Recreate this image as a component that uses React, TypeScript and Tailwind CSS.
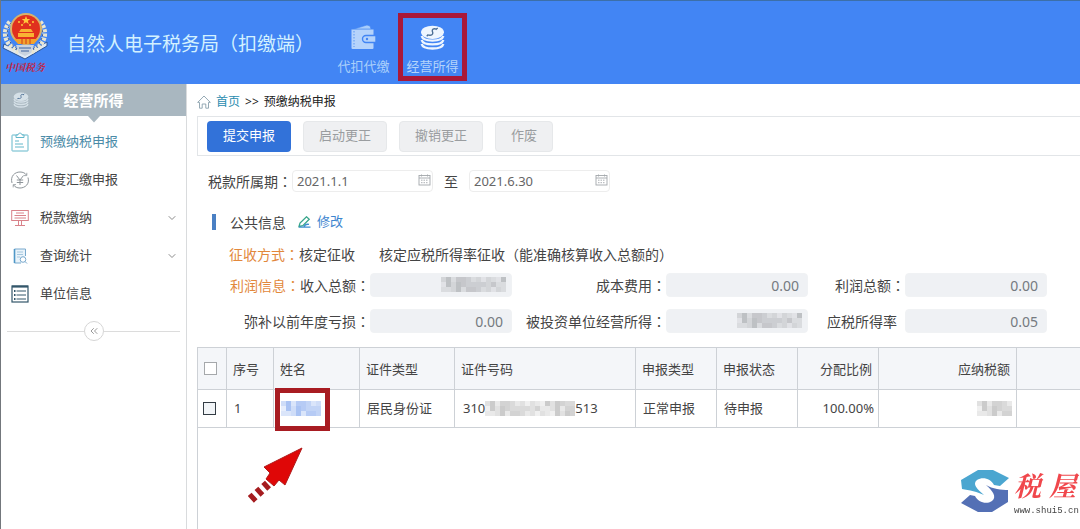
import { useState } from 'react';
import type { ReactNode } from 'react';
import { ChevronDown, ChevronsLeft } from 'lucide-react';

const INK = [4, 5, 3, 6, 4, 7, 3, 2, 5, 6, 3, 4, 7, 5, 3, 6, 2, 4, 5, 3, 6, 4, 7, 5];

// Block pattern shown in place of private values
function Redacted({ cols, className = '' }: { cols: number; className?: string }) {
  const cells = [];
  for (let row = 0; row < 3; row++) {
    for (let col = 0; col < cols; col++) {
      const level = INK[(col * 5 + row * 7) % INK.length];
      cells.push(
        <rect key={`${row}-${col}`} x={col * 5} y={row * 5} width="5" height="5" opacity={level / 10} />
      );
    }
  }
  return (
    <svg width={cols * 5} height="15" fill="currentColor" shapeRendering="crispEdges" aria-hidden="true" className={className}>
      {cells}
    </svg>
  );
}

function Colon() {
  return <span className="font-['Noto_Sans_CJK_TC',sans-serif]">：</span>;
}

function Emblem() {
  return (
    <svg width="48" height="50" viewBox="0 0 48 50" aria-hidden="true">
      <path d="M3 33 L24 43 L46 31 L46 35 L24 48 L2 37 Z" fill="#dfe8f3" stroke="#2b5596" strokeWidth="1" />
      <path d="M9 11 C1 20 3 33 18 41" fill="none" stroke="#e9e6d2" strokeWidth="5" strokeDasharray="3 1.2" />
      <path d="M39 11 C47 20 45 33 30 41" fill="none" stroke="#e9e6d2" strokeWidth="5" strokeDasharray="3 1.2" />
      <path d="M10 12 C3 21 6 32 18 39 M38 12 C45 21 42 32 30 39" fill="none" stroke="#3c5b94" strokeWidth="1" strokeDasharray="2 2" />
      <path d="M15 34 L33 34 L30 42 L24 45 L18 42 Z" fill="#c9d3df" />
      <path d="M18 37 H30 M20 40 H28" stroke="#3b61a0" strokeWidth="1" />
      <circle cx="25" cy="18" r="16" fill="#d9b36a" />
      <circle cx="25" cy="18" r="14" fill="#e0301e" />
      <path d="M25 5 l1.2 3 h3 l-2.4 2 l1 3 l-2.8-1.8 l-2.8 1.8 l1-3 l-2.4-2 h3 Z" fill="#ffc83d" />
      <circle cx="18" cy="11" r="1" fill="#ffc83d" />
      <circle cx="32" cy="11" r="1" fill="#ffc83d" />
      <circle cx="21" cy="14" r="1" fill="#ffc83d" />
      <circle cx="29" cy="14" r="1" fill="#ffc83d" />
      <path d="M20 18 H30 L32 21 H18 Z M17 22 H33 V26 H17 Z" fill="#f9b233" />
      <path d="M13 28 H37 L33 33 H17 Z" fill="#f3a32b" />
      <path d="M21 28 v5 M25 28 v5 M29 28 v5" stroke="#cf3a1b" strokeWidth="1" />
    </svg>
  );
}

function WalletIcon() {
  return (
    <svg width="26" height="25" viewBox="0 0 26 25" aria-hidden="true">
      <path d="M3 4 L16 0 L19 1 L20 4 Z" fill="#a8cdfb" stroke="#4285f4" strokeWidth="0.6" />
      <rect x="0.5" y="4" width="22" height="20" rx="1" fill="#b5d3fb" />
      <path d="M3 6 V22" stroke="#5b97f3" strokeWidth="1" strokeDasharray="1.5 1.5" />
      <path d="M1 4.5 H22" stroke="#6ea4f5" strokeWidth="0.8" />
      <path d="M25 10.5 H15 a3.5 3.5 0 0 0 0 7 H25 Z" fill="#b5d3fb" stroke="#4285f4" strokeWidth="1.4" />
      <circle cx="16" cy="14" r="1.2" fill="#4285f4" />
    </svg>
  );
}

function CoinsIcon({ size }: { size: number }) {
  return (
    <svg width={size} height={size} viewBox="0 0 24 24" aria-hidden="true">
      <g fill="none" stroke="currentColor" strokeWidth="2.2">
        <path d="M1.6 18.2 C3 24 21 24 22.4 18.2" />
        <path d="M1.6 14.4 C3 20 21 20 22.4 14.4" />
        <path d="M1.6 10.6 C3 16.4 21 16.4 22.4 10.6" />
      </g>
      <ellipse cx="12" cy="7" rx="11" ry="6.4" fill="currentColor" />
      <path d="M16 4 C13 3 11 4 12 6.5 C13 9 11 10.5 7.5 9.5 M17 2.8 L15 4.5 M8 9 L6.5 10.8" fill="none" stroke="#4a6d94" strokeWidth="1.3" />
    </svg>
  );
}

function ClipboardIcon() {
  return (
    <svg width="18" height="20" viewBox="0 0 18 20" fill="none" stroke="#62b7ca" aria-hidden="true">
      <rect x="1" y="3" width="16" height="16" rx="0.5" />
      <path d="M5 5.5 V3 H7 C7 0.5 11 0.5 11 3 H13 V5.5 Z" fill="#fff" />
      <path d="M4 9 H8 M4 12 H12 M4 15 H13" />
    </svg>
  );
}

function YuanIcon() {
  return (
    <svg width="18" height="18" viewBox="0 0 18 18" fill="none" stroke="#8d9499" aria-hidden="true">
      <path d="M1 12 C-1 5 4 1 9 1 C12 1 14 2 15.5 4 M17 6.5 C19 13 14 17 9 17 C6 17 4 16 2.5 14" />
      <path d="M15.8 1.8 V4.6 H13 M2.2 16.4 V13.6 H5" strokeWidth="0.8" />
      <path d="M5.5 4.5 L9 9 L12.5 4.5 M9 9 V14 M5.8 9 H12.2 M5.8 11.5 H12.2" />
    </svg>
  );
}

function MonitorIcon() {
  return (
    <svg width="18" height="18" viewBox="0 0 18 18" fill="none" stroke="#d9828a" aria-hidden="true">
      <rect x="0.7" y="1.5" width="16.6" height="10" />
      <path d="M5 4 H13 M3.5 6.5 H15 M3.5 9 H15 M7.5 11.5 V16 M10.5 11.5 V16 M4 16.5 H14" />
    </svg>
  );
}

function DocSearchIcon() {
  return (
    <svg width="18" height="18" viewBox="0 0 18 18" fill="none" stroke="#79a9cd" aria-hidden="true">
      <path d="M10 16 H3.5 V2 H14.5 V9" fill="#e9f3fa" />
      <path d="M3.5 2 V16" stroke="#4f97c7" strokeWidth="1.6" />
      <path d="M6 5 H12 M6 7.5 H12 M6 10 H9" stroke="#a5c7de" />
      <circle cx="12" cy="12.5" r="2.8" fill="#fff" />
      <path d="M14 14.5 L16 16.5" />
    </svg>
  );
}

function ListIcon() {
  return (
    <svg width="18" height="18" viewBox="0 0 18 18" fill="none" stroke="#33566a" aria-hidden="true">
      <rect x="1" y="1" width="16" height="16" strokeWidth="1.2" />
      <path d="M1 1.6 H17" strokeWidth="2" />
      <path d="M5.5 6 H15 M5.5 10 H15 M5.5 14 H15" />
      <path d="M3 6 H4.5 M3 10 H4.5 M3 14 H4.5" strokeWidth="2" />
    </svg>
  );
}

function HomeIcon() {
  return (
    <svg width="14" height="14" viewBox="0 0 14 14" fill="none" stroke="#8aa0ad" strokeWidth="0.9" aria-hidden="true">
      <path d="M0.7 7.4 L7 1 L13.3 7.4 H11.5 V13.2 H8.8 V9 H5.2 V13.2 H2.5 V7.4 Z" />
    </svg>
  );
}

function CalendarIcon() {
  return (
    <svg width="13" height="12" viewBox="0 0 13 12" fill="none" stroke="#a3a7ab" strokeWidth="0.9" aria-hidden="true" className="absolute right-[2px] top-[5px]">
      <rect x="1" y="1.5" width="11" height="9.5" />
      <path d="M1 4 H12 M3.5 0.5 V2.5 M9.5 0.5 V2.5" />
      <path d="M3 6.2 H10 M3 8.7 H10" strokeDasharray="1.5 1" />
    </svg>
  );
}

function PencilIcon() {
  return (
    <svg width="13" height="12" viewBox="0 0 13 12" fill="none" stroke="#37a58b" strokeWidth="1.3" aria-hidden="true">
      <path d="M1 10.5 L2 7 L8.5 0.8 L11.2 3.2 L4.8 9.6 Z" />
      <path d="M1 11.2 H12.5 M6 11 C7 8 9 8 11 8.4" stroke="#3f8fd0" />
    </svg>
  );
}

const menu = [
  { label: '预缴纳税申报', icon: <ClipboardIcon />, active: true, sub: false },
  { label: '年度汇缴申报', icon: <YuanIcon />, active: false, sub: false },
  { label: '税款缴纳', icon: <MonitorIcon />, active: false, sub: true },
  { label: '查询统计', icon: <DocSearchIcon />, active: false, sub: true },
  { label: '单位信息', icon: <ListIcon />, active: false, sub: false },
];

function DateBox({ id, label, initial }: { id: string; label: string; initial: string }) {
  const [value, setValue] = useState(initial);
  return (
    <div className="relative w-[141px] py-px">
      <input
        id={id}
        type="text"
        aria-label={label}
        value={value}
        onChange={(e) => setValue(e.target.value)}
        className="block h-[22px] w-full rounded-sm border border-[#ededed] bg-white pl-1 text-[13px] text-[#666]"
      />
      <CalendarIcon />
    </div>
  );
}

function Field({ id, label, value, colon = true, lead }: { id: string; label: string; value?: string; colon?: boolean; lead?: ReactNode }) {
  return (
    <>
      <label htmlFor={id} className={`whitespace-nowrap text-right ${colon ? '' : 'pr-2'}`}>
        {lead}
        {label}
        {colon && <Colon />}
      </label>
      <div className="relative">
        <input
          id={id}
          type="text"
          readOnly
          value={value ?? ''}
          className="block h-6 w-full rounded-[4px] border border-[#f0f2f4] bg-[#eff1f4] px-2 text-right text-[14px] text-[#757a80]"
        />
        {value === undefined && <Redacted cols={13} className="absolute right-[6px] top-1 text-[#aaacaf]" />}
      </div>
    </>
  );
}

export default function App() {
  const [checked, setChecked] = useState(false);
  const disabledBtn = 'h-[31px] rounded-[4px] border border-[#e6e8ea] bg-[#eff0f2] text-[13px] text-[#9a9da0]';
  const th = 'border border-[#cdd1d6] px-[6px] pt-[2px] font-normal';
  const td = 'border border-[#cdd1d6] px-[7px]';

  return (
    <div className="flex min-h-screen flex-col overflow-hidden border-l border-[#73777c] bg-white font-['Noto_Sans','Noto_Sans_CJK_SC',sans-serif] text-[#444]">
      {/* Header */}
      <header className="flex h-[84px] border-t border-[#3c6fa8] bg-[#4285f4]">
        <div className="w-[66px] pt-[10px]">
          <Emblem />
          <div className="w-12 text-center font-['Noto_Serif_CJK_SC','Noto_Sans_CJK_SC',serif] text-[10px] leading-[12px] font-bold italic text-[#c12645]">中国税务</div>
        </div>
        <h1 className="flex w-[262px] items-center whitespace-nowrap pt-1 text-[19px] text-[#d3f1ff]">自然人电子税务局（扣缴端）</h1>
        <nav className="flex pt-3">
          <a href="#withhold" className="flex h-[68px] w-[69px] flex-col items-center pt-3 text-[13px] text-[#abd0fb]">
            <WalletIcon />
            <span className="mt-1 leading-6">代扣代缴</span>
          </a>
          <a href="#income" className="flex h-[68px] w-[69px] flex-col items-center border-[5px] border-[#a91839] pt-[7px] text-[13px] text-[#b4d4fb]">
            <span className="text-[#eef6ff]"><CoinsIcon size={25} /></span>
            <span className="mt-1 whitespace-nowrap leading-6">经营所得</span>
          </a>
        </nav>
      </header>

      <div className="flex flex-1">
        {/* Sidebar */}
        <aside className="w-[186px] shrink-0 border-r border-[#d9dbdd]">
          <div className="relative flex h-8 items-center justify-center bg-[#a9b7c0] text-[15px] font-bold text-white">
            <span className="absolute left-3 text-[#d5e0e7]"><CoinsIcon size={16} /></span>
            经营所得
            <svg width="12" height="7" viewBox="0 0 12 7" aria-hidden="true" className="absolute top-8">
              <path d="M0 0 H12 L6 6.5 Z" fill="#a9b7c0" />
            </svg>
          </div>
          <ul className="pt-[7px]">
            {menu.map((item) => (
              <li key={item.label}>
                <a href="#menu" className={`flex h-[38px] items-center pr-2 pl-[10px] text-[13px] ${item.active ? 'text-[#4b8ba8]' : 'text-[#444]'}`}>
                  <span className="flex w-[29px]">{item.icon}</span>
                  <span className="flex-1">{item.label}</span>
                  {item.sub && <ChevronDown className="h-3 w-3 text-[#8b8b8b]" />}
                </a>
              </li>
            ))}
          </ul>
          <div className="mt-2 flex items-center px-[6px]">
            <div className="h-px flex-1 bg-[#dcdcdc]" />
            <button aria-label="收起" className="flex h-5 w-5 items-center justify-center rounded-full border border-[#d6d6d6] text-[#999]">
              <ChevronsLeft className="h-3 w-3" />
            </button>
            <div className="h-px flex-1 bg-[#dcdcdc]" />
          </div>
        </aside>

        {/* Content */}
        <main className="flex min-w-0 flex-1 flex-col pl-[10px]">
          <div className="flex h-8 items-center pt-1 text-[12px] text-[#222]">
            <HomeIcon />
            <a href="#home" className="ml-[5px] text-[#2a8db0]">首页</a>
            <span className="mx-[5px]">&gt;&gt;</span>
            <span>预缴纳税申报</span>
          </div>

          <div className="flex h-10 items-center gap-3 border-y border-l border-[#e2e5e8] pl-[9px]">
            <button className="h-[31px] w-[84px] rounded-[4px] bg-[#3272d9] text-[13px] text-white">提交申报</button>
            <button disabled className={`${disabledBtn} w-[84px]`}>启动更正</button>
            <button disabled className={`${disabledBtn} w-[84px]`}>撤销更正</button>
            <button disabled className={`${disabledBtn} w-[58px]`}>作废</button>
          </div>

          <div className="mt-[13px] flex h-6 items-center pl-[11px] text-[14px]">
            <label htmlFor="from">税款所属期<Colon /></label>
            <DateBox id="from" label="税款所属期起" initial="2021.1.1" />
            <label htmlFor="to" className="w-9 text-center">至</label>
            <DateBox id="to" label="税款所属期止" initial="2021.6.30" />
          </div>

          <div className="mt-[17px] flex h-6 items-center pl-[15px] text-[14px]">
            <span className="mr-[14px] h-4 w-1 bg-[#4a80c4]" />
            <h2>公共信息</h2>
            <a href="#edit" className="ml-3 flex items-center gap-[6px] text-[13px] text-[#3d85cf]">
              <PencilIcon />
              修改
            </a>
          </div>

          <div className="mt-2 flex h-6 items-center pl-8 text-[14px]">
            <span className="text-[#e2883c]">征收方式<Colon /></span>
            <span>核定征收</span>
            <span className="ml-6">
              核定应税所得率征收
              <span className="font-['Noto_Sans_CJK_TC',sans-serif]">（</span>
              能准确核算收入总额的
              <span className="font-['Noto_Sans_CJK_TC',sans-serif]">）</span>
            </span>
          </div>

          <div className="mt-[7px] grid grid-cols-[173px_142px_154px_142px_97px_142px] items-center gap-y-3 text-[14px]">
            <Field id="income" label="收入总额" lead={<span className="text-[#e2883c]">利润信息<Colon /></span>} />
            <Field id="cost" label="成本费用" value="0.00" />
            <Field id="profit" label="利润总额" value="0.00" />
            <Field id="loss" label="弥补以前年度亏损" value="0.00" />
            <Field id="invest" label="被投资单位经营所得" />
            <Field id="rate" label="应税所得率" value="0.05" colon={false} />
          </div>

          {/* Table */}
          <div className="mt-[14px] flex-1 border-l border-[#cdd1d6]">
            <div className="-ml-px">
              <table className="w-full table-fixed border-collapse text-[13px]">
                <colgroup>
                  <col className="w-[29px]" />
                  <col className="w-[47px]" />
                  <col className="w-[86px]" />
                  <col className="w-[95px]" />
                  <col className="w-[181px]" />
                  <col className="w-[81px]" />
                  <col className="w-[81px]" />
                  <col className="w-[81px]" />
                  <col className="w-[138px]" />
                  <col />
                </colgroup>
                <thead>
                  <tr className="h-[42px] bg-[#f4f6f9] text-left">
                    <th className="border border-[#cdd1d6] px-[6px]">
                      <input type="checkbox" aria-label="全选" className="block h-[13px] w-[13px] appearance-none border border-[#a5a8ab] bg-white checked:bg-[#3272d9]" />
                    </th>
                    <th className={th}>序号</th>
                    <th className={th}>姓名</th>
                    <th className={th}>证件类型</th>
                    <th className={th}>证件号码</th>
                    <th className={th}>申报类型</th>
                    <th className={th}>申报状态</th>
                    <th className={`${th} text-right`}>分配比例</th>
                    <th className={`${th} text-right`}>应纳税额</th>
                    <th className="border-y border-[#cdd1d6]" />
                  </tr>
                </thead>
                <tbody>
                  <tr className="h-[38px]">
                    <td className="border border-[#cdd1d6] px-[5px]">
                      <input
                        type="checkbox"
                        aria-label="选择第1行"
                        checked={checked}
                        onChange={(e) => setChecked(e.target.checked)}
                        className="block h-[13px] w-[13px] appearance-none border border-[#333c44] bg-[#f2f5f8] checked:bg-[#3272d9]"
                      />
                    </td>
                    <td className={td}>1</td>
                    <td className={`relative ${td}`}>
                      <Redacted cols={8} className="text-[#86a9ee]" />
                      <div className="absolute -top-[2px] left-px h-[43px] w-[55px] border-[5px] border-[#a81c22]" />
                      <svg width="56" height="58" viewBox="0 0 56 58" aria-hidden="true" className="absolute top-[57px] -left-[26px]">
                        <path d="M54 1 L16 20 L22 26 L18 32 L26 39 L31 33 L37 38 Z" fill="#df0707" stroke="#b01a1a" strokeWidth="1" />
                        <path d="M20 37 L1 54" stroke="#a51c1f" strokeWidth="9" strokeDasharray="5 4" fill="none" />
                      </svg>
                    </td>
                    <td className={td}>居民身份证</td>
                    <td className={td}>
                      <div className="flex items-center whitespace-nowrap px-px">
                        310
                        <Redacted cols={18} className="text-[#b5b5b5]" />
                        513
                      </div>
                    </td>
                    <td className={td}>正常申报</td>
                    <td className={td}>待申报</td>
                    <td className="border border-[#cdd1d6] px-1 text-right">100.00%</td>
                    <td className="border border-[#cdd1d6] px-1">
                      <Redacted cols={7} className="ml-auto text-[#b5b5b5]" />
                    </td>
                    <td className="border-y border-[#cdd1d6]" />
                  </tr>
                </tbody>
              </table>
            </div>
          </div>
        </main>
      </div>

      {/* Site mark */}
      <div className="fixed right-0 bottom-3 flex items-center gap-1">
        <svg width="50" height="44" viewBox="0 0 50 44" aria-hidden="true">
          <path d="M1 11 L18 1 H33 L49 9 L40 17 L34 16 C31 10 23 7 17 11 C12 15 17 20 24 26 C18 23 9 21 2 20 Z" fill="#4ba6d0" />
          <path d="M48 33 L32 43 H18 L1 34 L10 26 L15 27 C18 33 26 36 32 32 C37 28 33 22 26 16 C32 20 42 21 48 21 Z" fill="#5470b5" />
        </svg>
        <div className="flex w-[66px] flex-col">
          <div className="flex justify-between pr-1 font-['Noto_Serif_CJK_SC','Noto_Sans_CJK_SC',serif] text-[27px] leading-10 font-bold italic text-[#f0474c]">
            <span>税</span>
            <span>屋</span>
          </div>
          <a href="#site" className="font-['Liberation_Mono',monospace] text-[9px] leading-3 text-[#444]">www.shui5.cn</a>
        </div>
      </div>
    </div>
  );
}
